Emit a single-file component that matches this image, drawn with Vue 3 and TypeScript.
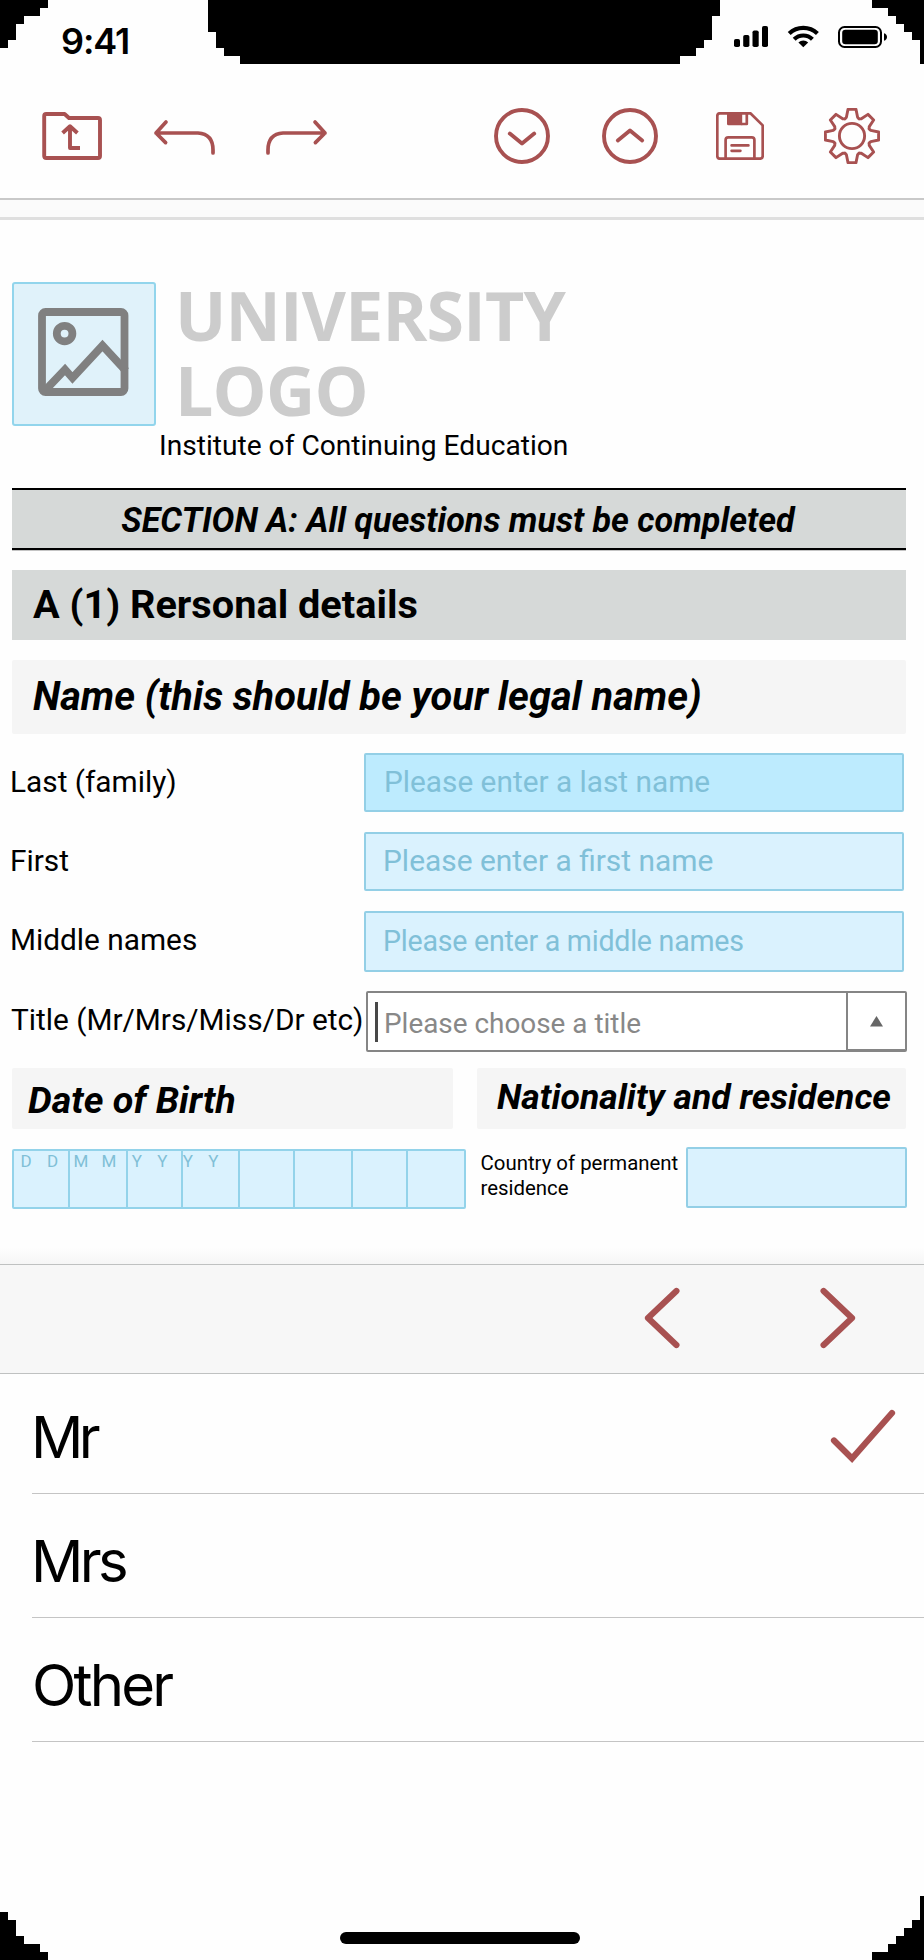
<script setup lang="ts">
import { ref } from 'vue'

interface TextField {
  id: string
  label: string
  placeholder: string
  active?: boolean
}

const fields: TextField[] = [
  { id: 'last', label: 'Last (family)', placeholder: 'Please enter a last name', active: true },
  { id: 'first', label: 'First', placeholder: 'Please enter a first name' },
  { id: 'middle', label: 'Middle names', placeholder: 'Please enter a middle names' },
]

const dateMask: string[] = ['D', 'D', 'M', 'M', 'Y', 'Y', 'Y', 'Y']
const titles: string[] = ['Mr', 'Mrs', 'Other']
const selected = ref<string>('Mr')

// Eight flared teeth around the centre of a 56px box
function gearPath(): string {
  const pts: string[] = []
  for (let k = 0; k < 8; k++) {
    const a = (k * Math.PI) / 4
    const tooth: [number, number][] = [[-7.2, 17], [-5.6, 18.8], [-4, 26.6], [4, 26.6], [5.6, 18.8], [7.2, 17]]
    for (const [t, r] of tooth) {
      const x = 28 + t * Math.cos(a) + r * Math.sin(a)
      const y = 28 + t * Math.sin(a) - r * Math.cos(a)
      pts.push(`${x.toFixed(2)} ${y.toFixed(2)}`)
    }
  }
  return `M${pts.join('L')}Z`
}
const gear = gearPath()
</script>

<template>
  <div class="screen">
    <header class="status">
      <span class="time">9:41</span>
      <svg class="status-icons" width="156" height="24" viewBox="0 0 156 24">
        <rect x="0" y="14" width="6" height="8" rx="1.8" />
        <rect x="9.2" y="10" width="6.2" height="12" rx="1.8" />
        <rect x="18.5" y="5.5" width="6.2" height="16.5" rx="1.8" />
        <rect x="28" y="1" width="6" height="21" rx="1.8" />
        <g fill="none" stroke="#000" stroke-width="4.2">
          <path d="M55.2 8.4A20.5 20.5 0 0 1 83.4 8.4" />
          <path d="M60.2 14.2A13 13 0 0 1 78.4 14.2" />
        </g>
        <path d="M69.3 22.2L64.4 17.4A7.2 7.2 0 0 1 74.2 17.4Z" />
        <rect x="105" y="2" width="42" height="20" rx="5.5" fill="none" stroke="#000" stroke-width="2" />
        <rect x="108.2" y="4.8" width="35.6" height="14.4" rx="3.2" />
        <path d="M150 8.2q3 1 3 3.8t-3 3.8z" />
      </svg>
    </header>

    <nav class="toolbar">
      <svg class="icon folder" width="60" height="48" viewBox="0 0 60 48">
        <path d="M2.2 4Q2.2 2 4.2 2H22.6L27 6H56Q58 6 58 8V44Q58 46 56 46H4.2Q2.2 46 2.2 44Z" />
        <path d="M38 36H28V14.5M20.6 21L28 14.2L35.4 21" />
      </svg>
      <svg class="icon undo" width="64" height="38" viewBox="0 0 64 38">
        <path d="M13 4L3 15L12.6 24.6M3 15H45Q60 16 60 32V35" />
      </svg>
      <svg class="icon redo" width="64" height="38" viewBox="0 0 64 38">
        <path d="M51 4L61 15L51.4 24.6M61 15H19Q4 16 4 32V35" />
      </svg>
      <span class="spacer"></span>
      <svg class="icon" width="56" height="56" viewBox="0 0 56 56">
        <circle cx="28" cy="28" r="26" />
        <path class="round" d="M15.8 25.6L28 35.4L40.2 25.6" />
      </svg>
      <svg class="icon up" width="56" height="56" viewBox="0 0 56 56">
        <circle cx="28" cy="28" r="26" />
        <path class="round" d="M15.8 32.4L28 22.6L40.2 32.4" />
      </svg>
      <svg class="icon save" width="48" height="48" viewBox="0 0 48 48">
        <path d="M4 1.3H34.4L46.7 13.4V44Q46.7 46.7 44 46.7H4Q1.3 46.7 1.3 44V4Q1.3 1.3 4 1.3Z" />
        <path class="solid" d="M11 1H26.2V13.2H12.5Q11 13.2 11 11.7Z" />
        <path d="M26 12H30.8V2" />
        <path d="M9.6 46V28Q9.6 25.3 12.3 25.3H35.7Q38.4 25.3 38.4 28V46M15.6 33.4H32.4M15.6 38.8H24.4" />
      </svg>
      <svg class="icon gear" width="56" height="56" viewBox="0 0 56 56">
        <circle cx="28" cy="28" r="12.6" />
        <path :d="gear" />
      </svg>
    </nav>

    <div class="strip"></div>

    <main class="document">
      <div class="brand">
        <div class="logo-box">
          <svg width="92" height="89" viewBox="0 0 92 89">
            <rect x="4" y="4" width="82.5" height="80" rx="3.5" />
            <circle cx="26.6" cy="25.6" r="7.8" />
            <path d="M7.5 82L27 61.5L34.5 70L64.5 37.5L88 63" />
          </svg>
        </div>
        <div class="logo-text">UNIVERSITY<br>LOGO</div>
      </div>
      <div class="institute">Institute of Continuing Education</div>

      <div class="section-title">SECTION A: All questions must be completed</div>
      <div class="subsection">A (1) Rersonal details</div>
      <div class="group-title">Name (this should be your legal name)</div>

      <div class="fields">
        <div v-for="f in fields" :key="f.id" class="field-row">
          <label class="label">{{ f.label }}</label>
          <div class="input" :class="[f.id, { active: f.active }]">{{ f.placeholder }}</div>
        </div>
      </div>

      <div class="title-row">
        <label class="title-label">Title (Mr/Mrs/Miss/Dr etc)</label>
        <div class="select">
          <i class="caret"></i>
          <span class="select-text">Please choose a title</span>
          <div class="arrow">
            <svg width="13" height="11" viewBox="0 0 13 11"><path d="M0 10.5L6.5 0L13 10.5Z" /></svg>
          </div>
        </div>
      </div>

      <div class="half-titles">
        <div class="half dob-title">Date of Birth</div>
        <div class="half nat-title">Nationality and residence</div>
      </div>

      <div class="bottom-row">
        <div class="date">
          <i v-for="(_, i) in dateMask" :key="i" class="cell"></i>
          <div class="mask">
            <span v-for="(c, i) in dateMask" :key="i" :class="{ tight: i === 3 }">{{ c }}</span>
          </div>
        </div>
        <div class="country">Country of permanent<br>residence</div>
        <div class="country-box"></div>
      </div>
    </main>

    <div class="picker-bar">
      <svg width="36" height="62" viewBox="0 0 36 62"><path d="M32.4 4L4 31L32.4 58" /></svg>
      <svg width="36" height="62" viewBox="0 0 36 62"><path d="M3.6 4L32 31L3.6 58" /></svg>
    </div>

    <ul class="options">
      <li v-for="t in titles" :key="t" class="option" @click="selected = t">
        <span>{{ t }}</span>
        <svg v-if="t === selected" width="66" height="56" viewBox="0 0 66 56">
          <path d="M4 32.5L22 50.5L62 5" />
        </svg>
      </li>
    </ul>

    <footer class="home"><i></i></footer>

    <svg class="bezel" width="924" height="1960" viewBox="0 0 924 1960" shape-rendering="crispEdges">
      <path d="M0 0H48V8H40V16H24V24H16V40H8V48H0Z" />
      <path d="M208 0H720V16H712V40H704V48H696V56H680V64H240V56H224V48H216V32H208Z" />
      <path d="M872 0H924V64H920V40H912V32H904V24H896V16H888V8H872Z" />
      <path d="M0 1912H8V1920H16V1936H24V1944H40V1952H48V1960H0Z" />
      <path d="M924 1896H920V1920H912V1928H904V1936H896V1944H888V1952H872V1960H924Z" />
    </svg>
  </div>
</template>

<style>
body {
  margin: 0;
  background: #fff;
}
</style>

<style scoped>
.screen {
  position: relative;
  box-sizing: border-box;
  width: 924px;
  height: 1960px;
  overflow: hidden;
  display: flex;
  flex-direction: column;
  background: #fefefe;
  color: #000;
  font-family: Roboto, "Liberation Sans", sans-serif;
}
.screen * {
  box-sizing: border-box;
}
.bezel {
  position: absolute;
  inset: 0;
  pointer-events: none;
}

.status {
  height: 74px;
  flex: none;
  display: flex;
  justify-content: space-between;
  align-items: flex-start;
  padding: 25px 34px 0 61px;
}
.time {
  font: 600 36px/32px Inter, sans-serif;
  letter-spacing: -1.1px;
}

.toolbar {
  height: 126px;
  flex: none;
  display: flex;
  align-items: center;
  padding: 0 44px 0 42px;
  border-bottom: 2px solid #c9c9c9;
}
.icon {
  fill: none;
  stroke: #a85151;
  stroke-width: 3.9;
  stroke-linejoin: round;
}
.undo {
  margin-left: 51px;
  margin-top: 1px;
  stroke-width: 3.7;
  stroke-linecap: round;
}
.redo {
  margin-left: 47px;
  margin-top: 1px;
  stroke-width: 3.7;
  stroke-linecap: round;
}
.spacer {
  flex: 1;
}
.round {
  stroke-linecap: round;
}
.up {
  margin-left: 52px;
}
.save {
  margin-left: 58px;
  stroke-width: 2.7;
  stroke-linecap: round;
}
.solid {
  fill: #a85151;
  stroke: none;
}
.gear {
  margin-left: 60px;
  stroke-width: 2.9;
}

.strip {
  height: 20px;
  flex: none;
  background: #fbfbfb;
  border-bottom: 3px solid #dfdfdf;
}

.document {
  height: 1044px;
  flex: none;
  padding: 62px 18px 0 12px;
  background: linear-gradient(to bottom, #fefefe 1028px, #f6f6f6 1044px);
}
.brand {
  display: flex;
  height: 144px;
}
.logo-box {
  width: 144px;
  height: 144px;
  border: 2px solid #92d5ec;
  border-radius: 3px;
  background: #e0f2fa;
  padding: 24px 0 0 24px;
}
.logo-box svg {
  display: block;
  fill: none;
  stroke: #808080;
  stroke-width: 7.8;
  overflow: hidden;
}
.logo-text {
  margin-left: 19px;
  margin-top: -4px;
  font: 700 68px/74.5px "Open Sans", sans-serif;
  letter-spacing: -0.8px;
  color: #ccc;
}
.institute {
  margin-left: 147px;
  height: 62px;
  font-size: 28.15px;
  line-height: 40px;
}
.section-title {
  height: 62px;
  padding-right: 2px;
  border-top: 2px solid #000;
  border-bottom: 2px solid #000;
  box-shadow: 0 1px 0 #c4c4c4;
  background: #d6d9d8;
  text-align: center;
  font: italic 700 34.1px/60px Roboto, sans-serif;
}
.subsection {
  margin-top: 20px;
  height: 70px;
  padding-left: 21px;
  background: #d6d9d8;
  font-size: 39.7px;
  font-weight: 700;
  line-height: 70px;
}
.group-title {
  margin-top: 20px;
  height: 74px;
  padding-left: 21px;
  background: #f5f5f5;
  border-radius: 2px;
  font: italic 700 39.75px/74px Roboto, sans-serif;
}
.fields {
  display: flex;
  flex-direction: column;
  gap: 20px;
  margin-top: 19px;
}
.field-row {
  display: grid;
  grid-template-columns: 354px 540px;
  height: 59px;
  margin-left: -2px;
}
.label {
  font-size: 29.8px;
  line-height: 58px;
  white-space: nowrap;
}
.input {
  border: 2px solid #93cfe6;
  border-radius: 2px;
  background: #daf2fe;
  color: #80c0d8;
  padding-left: 17px;
  font-size: 29.9px;
  line-height: 54px;
  white-space: nowrap;
}
.input.active {
  background: #bdebfe;
  padding-left: 18px;
  font-size: 29.8px;
}
.input.middle {
  font-size: 28.6px;
  line-height: 57px;
  letter-spacing: -0.25px;
}
.title-row {
  display: flex;
  height: 61px;
  margin-top: 21px;
  margin-left: -1px;
  margin-right: -1px;
}
.title-label {
  width: 355px;
  flex: none;
  font-size: 29.8px;
  line-height: 58px;
  white-space: nowrap;
}
.select {
  flex: 1;
  display: flex;
  border: 2px solid #858585;
  border-radius: 2px;
  background: #fff;
}
.caret {
  width: 3px;
  height: 40px;
  margin: 9px 0 0 7px;
  background: #484848;
}
.select-text {
  flex: 1;
  margin-left: 6px;
  font-size: 27.9px;
  line-height: 61px;
  color: #888;
}
.arrow {
  width: 59px;
  border-left: 2px solid #858585;
  border-bottom: 1px solid #858585;
  display: flex;
  align-items: center;
  justify-content: center;
}
.arrow svg {
  fill: #666;
}
.half-titles {
  display: flex;
  justify-content: space-between;
  margin-top: 16px;
}
.half {
  height: 61px;
  background: #f5f5f5;
  border-radius: 2px;
  white-space: nowrap;
}
.dob-title {
  width: 441px;
  padding-left: 16px;
  font: italic 700 37.7px/64px Roboto, sans-serif;
}
.nat-title {
  width: 429px;
  padding-left: 20px;
  font: italic 700 35.5px/59px Roboto, sans-serif;
}
.bottom-row {
  display: flex;
  align-items: flex-start;
  margin-top: 18px;
  margin-right: -1px;
}
.date {
  position: relative;
  margin-top: 2px;
  width: 454px;
  height: 60px;
  display: grid;
  grid-template-columns: 56px 57.5px 55px 57.5px 55px 58px 55px 1fr;
  border: 2px solid #93d3ea;
  border-radius: 2px;
  background: #daf2fe;
}
.cell {
  border-right: 2px solid #93d3ea;
}
.cell:nth-child(8) {
  border-right: 0;
}
.mask {
  position: absolute;
  left: 6.5px;
  top: 0;
  display: flex;
  gap: 15.3px;
  font-size: 17px;
  line-height: 20px;
  color: #80bfd6;
}
.tight {
  margin-left: -2px;
}
.country {
  margin-left: 14.5px;
  margin-top: 4px;
  width: 205.5px;
  font-size: 20.4px;
  line-height: 25px;
  white-space: nowrap;
}
.country-box {
  flex: 1;
  height: 61px;
  border: 2px solid #93cfe6;
  border-radius: 2px;
  background: #daf2fe;
}

.picker-bar {
  height: 110px;
  flex: none;
  display: flex;
  justify-content: flex-end;
  align-items: center;
  gap: 140px;
  padding-right: 68px;
  padding-bottom: 3px;
  border-top: 1px solid #bfc1c1;
  border-bottom: 1px solid #bfc1c1;
  background: #f7f7f7;
}
.picker-bar svg,
.option svg {
  fill: none;
  stroke: #a85151;
  stroke-width: 6.2;
  stroke-linecap: round;
}
.picker-bar svg {
  stroke-linejoin: round;
}
.options {
  list-style: none;
  margin: 0 0 0 32px;
  padding: 0;
}
.option {
  height: 124px;
  display: flex;
  justify-content: space-between;
  align-items: flex-start;
  border-bottom: 1px solid #c4c4c4;
  font: 400 58px/88px Inter, sans-serif;
  letter-spacing: -3.6px;
  padding-top: 23px;
  padding-right: 28px;
}
.option span {
  margin-left: -1px;
}
.option:nth-child(3) span {
  margin-left: 0;
  letter-spacing: -2.8px;
}
.option:first-child {
  height: 120px;
  padding-top: 19px;
  letter-spacing: -4.6px;
}
.option:first-child svg {
  margin-top: 15px;
}
.home {
  margin-top: auto;
  height: 28px;
  flex: none;
  display: flex;
  justify-content: center;
  padding-right: 4px;
}
.home i {
  width: 240px;
  height: 12px;
  border-radius: 6px;
  background: #000;
}
</style>
